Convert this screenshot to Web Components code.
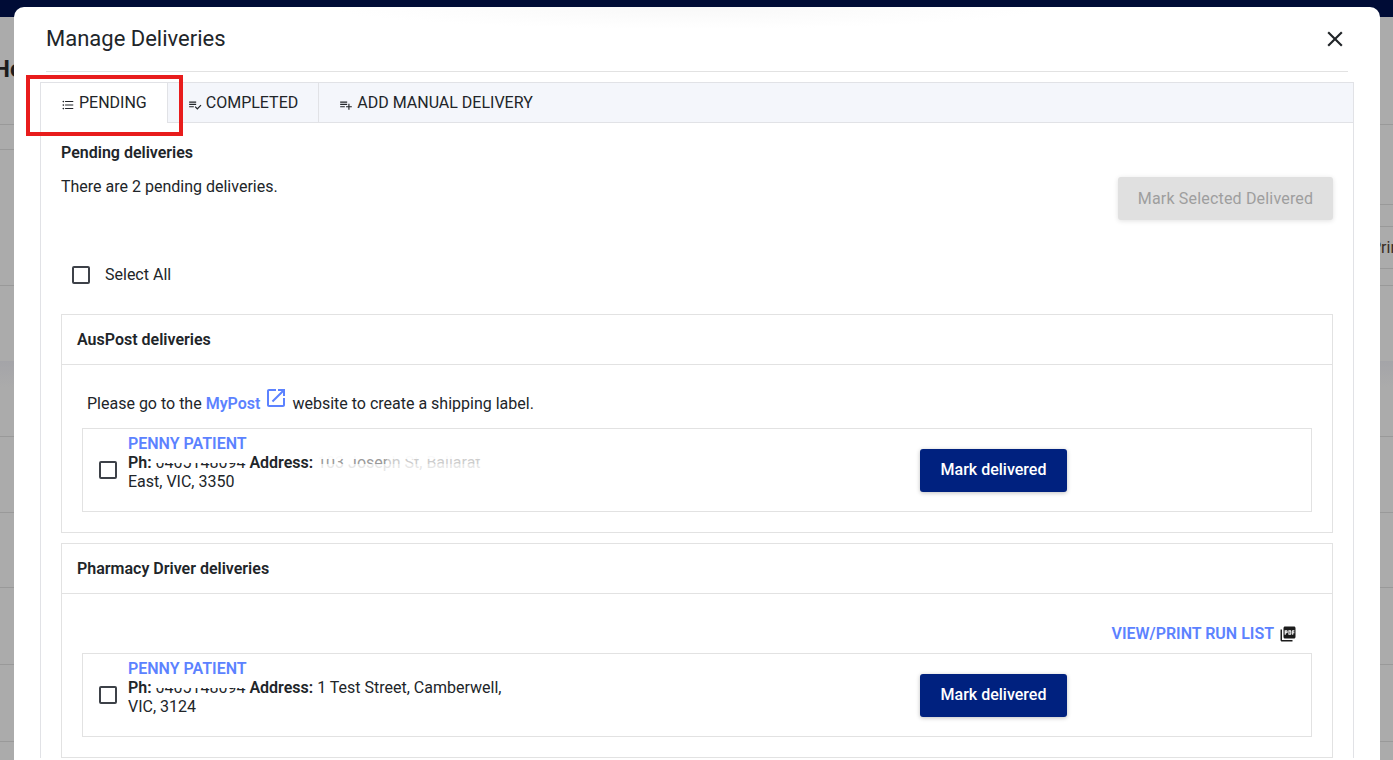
<!doctype html>
<html lang="en">
<head>
<meta charset="utf-8">
<title>Manage Deliveries</title>
<style>
  html, body { margin: 0; height: 100%; overflow: hidden; }
  body { font: 16px/19px Roboto, "Liberation Sans", sans-serif; color: #212529; }
</style>
</head>
<body>

<template id="pageBackdropTemplate">
  <style>
    :host { display: block; position: relative; height: 760px; overflow: hidden; background: #ababab; }
    .nav { height: 17px; background: #000c36; }
    .title { height: 108px; border-bottom: 1px solid #999; display: flex; align-items: center; box-sizing: border-box; overflow: hidden; }
    .title span { margin-left: -7px; margin-top: -2px; font-size: 24px; font-weight: 700; color: #1d1d1d; }
    .columns { display: flex; justify-content: space-between; height: 161px; border-bottom: 1px solid #999; box-sizing: border-box; }
    .col-left div { width: 14px; height: 24px; border-bottom: 1px solid #999; }
    .col-right { width: 22px; display: flex; flex-direction: column; }
    .col-right div { border-bottom: 1px solid #999; box-sizing: border-box; flex: none; }
    .print { display: flex; align-items: center; white-space: nowrap; color: #3a2c22; }
    .row { height: 75px; border-bottom: 1px solid #999; }
    .row.shade { background: linear-gradient(#a4a4a8, #ababab 26px); height: 75px; }
    .row.tall { height: 76px; }
    .row.plain { border-bottom: 0; }
    ::slotted(delivery-modal) { position: absolute; left: 14px; top: 7px; }
  </style>
  <div class="nav"></div>
  <div class="title"><span>Home</span></div>
  <div class="columns">
    <div class="col-left"><div></div></div>
    <div class="col-right">
      <div style="height:80px"></div>
      <div style="height:22px"></div>
      <div class="print" style="height:42px">Print</div>
      <div style="height:17px;border-bottom:0"></div>
    </div>
  </div>
  <div class="row plain"></div>
  <div class="row shade"></div>
  <div class="row"></div>
  <div class="row" style="height:74px"></div>
  <div class="row tall"></div>
  <div class="row tall"></div>
  <div class="row plain"></div>
  <slot></slot>
</template>

<template id="deliveryModalTemplate">
  <style>
    :host { display: block; position: relative; width: 1366px; height: 800px; box-sizing: border-box; padding: 0 26px; border-radius: 10px;
      background: radial-gradient(ellipse 360px 22px at 676px 0, #f8f8f8, #fff) no-repeat #fff; color: #212529; }
    header { display: flex; align-items: center; justify-content: space-between; height: 65px; box-sizing: border-box; margin: 0 6px; border-bottom: 1px solid #e2e2e2; }
    h1 { margin: 0; font-size: 22px; line-height: 26px; font-weight: 400; }
    button { display: flex; margin: 0; padding: 0; border: 0; background: none; color: #212529; }
    main { margin-top: 10px; }
    .callout { position: absolute; left: 12px; top: 68px; width: 157px; height: 61px; box-sizing: border-box; border: 4px solid #e81c1c; pointer-events: none; }
  </style>
  <header>
    <h1><slot name="title"></slot></h1>
    <button aria-label="Close"><app-icon name="close" size="26"></app-icon></button>
  </header>
  <main><slot></slot></main>
  <div class="callout"></div>
</template>

<template id="tabBarTemplate">
  <style>
    :host { display: flex; height: 41px; box-sizing: border-box; background: #f4f6fb; border: 1px solid #e1e2e6; }
  </style>
  <slot></slot>
</template>

<template id="tabItemTemplate">
  <style>
    :host { display: flex; align-items: center; gap: 4px; height: 39px; padding: 0 20px 1px; box-sizing: border-box; border-right: 1px solid #e1e2e6; color: #212529; text-transform: uppercase; white-space: nowrap; }
    :host([active]) { background: #fff; height: 40px; padding-bottom: 2px; }
    :host([plain]) { border-right: 0; }
    app-icon { margin-top: 5px; }
  </style>
  <app-icon size="14"></app-icon>
  <slot></slot>
</template>

<template id="tabPanelTemplate">
  <style>
    :host { display: block; padding: 20px 20px 0; border-left: 1px solid #e1e2e6; border-right: 1px solid #e1e2e6; }
    h2 { margin: 0; font-size: 16px; line-height: 19px; font-weight: 600; }
    .summary { display: flex; justify-content: space-between; margin-top: 15px; }
    .mark-all { width: 215px; height: 43px; padding: 0; border: 0; border-radius: 3px; background: #e0e0e0; color: #9e9e9e; font: inherit; letter-spacing: .18px; box-shadow: 0 1px 5px rgba(0,0,0,.12); }
    .select-all { display: flex; align-items: center; gap: 15px; height: 18px; margin: 46px 0 30px 11px; }
    .select-all span { margin-bottom: 2px; }
    .cards { display: flex; flex-direction: column; gap: 10px; }
  </style>
  <h2><slot name="heading"></slot></h2>
  <div class="summary">
    <span><slot name="summary"></slot></span>
    <button class="mark-all" disabled>Mark Selected Delivered</button>
  </div>
  <div class="select-all"><check-box></check-box><span>Select All</span></div>
  <div class="cards"><slot></slot></div>
</template>

<template id="deliveryCardTemplate">
  <style>
    :host { display: block; border: 1px solid #e2e2e2; }
    h3 { display: flex; align-items: center; height: 49px; margin: 0; padding: 0 15px; border-bottom: 1px solid #e2e2e2; font-size: 16px; line-height: 19px; font-weight: 600; }
    .body { padding: 0 20px 20px; }
  </style>
  <h3><slot name="heading"></slot></h3>
  <div class="body"><slot></slot></div>
</template>

<template id="mypostNoteTemplate">
  <style>
    :host { display: flex; align-items: center; gap: 4px; height: 19px; padding: 29px 0 15px 5px; white-space: nowrap; }
    b { color: #5c82ff; font-weight: 600; }
    app-icon { margin-bottom: 12px; color: #5c82ff; }
  </style>
  <span>Please go to the <b>MyPost</b></span>
  <app-icon name="open" size="24"></app-icon>
  <span>website to create a shipping label.</span>
</template>

<template id="runListLinkTemplate">
  <style>
    :host { display: flex; justify-content: flex-end; align-items: center; gap: 5px; height: 19px; padding: 30px 15px 10px 0; color: #5c82ff; font-weight: 600; }
    app-icon { color: #1c1c1c; }
  </style>
  <span>VIEW/PRINT RUN LIST</span>
  <app-icon name="pdf" size="18"></app-icon>
</template>

<template id="deliveryRowTemplate">
  <style>
    :host { display: flex; align-items: center; height: 84px; box-sizing: border-box; padding-left: 16px; border: 1px solid #e2e2e2; }
    .info { flex: 0 0 380px; align-self: flex-start; margin-left: 11px; padding-top: 5px; }
    .name { color: #5c82ff; font-weight: 600; text-transform: uppercase; }
    b { font-weight: 600; }
    button { width: 147px; height: 43px; margin-left: 412px; padding: 0 0 2px; border: 0; border-radius: 3px; background: #00217f; color: #fff; font: 500 16px/19px Roboto, "Liberation Sans", sans-serif; box-shadow: 0 1px 4px rgba(0,0,0,.25); }
  </style>
  <check-box></check-box>
  <div class="info">
    <div class="name"><slot name="name"></slot></div>
    <div><b>Ph:</b> <slot name="phone"></slot> <b>Address:</b> <slot name="address"></slot></div>
  </div>
  <button>Mark delivered</button>
</template>

<template id="redactedTextTemplate">
  <style>
    :host { display: inline-block; position: relative; line-height: 19px; vertical-align: top; }
    .wipe { position: absolute; left: -2px; right: -2px; top: 0; height: 10px; background: #fff; }
    .wipe.low { top: 15px; height: 1px; background: rgba(255,255,255,.5); }
    .mid { display: none; }
    :host([kind="address"]) { color: #9a9a9a; }
    :host([kind="address"]) .wipe { height: 6px; background: rgba(255,255,255,.95); }
    :host([kind="address"]) .wipe.low { top: 11px; height: 8px; background: rgba(255,255,255,.75); }
    :host([kind="address"]) .mid { display: block; position: absolute; left: 70px; right: -2px; top: 6px; height: 5px; background: rgba(255,255,255,.5); }
  </style>
  <slot></slot>
  <div class="wipe"></div>
  <div class="wipe low"></div>
  <div class="mid"></div>
</template>

<template id="checkBoxTemplate">
  <style>
    :host { display: block; flex: none; width: 18px; height: 18px; box-sizing: border-box; border: 2px solid #3d4148; border-radius: 2px; background: #fff; }
  </style>
</template>

<script>
  (function deliveries(customElements, document) {
    'use strict';

    const ICONS = {
      list: 'M4 10.5c-.83 0-1.5.67-1.5 1.5s.67 1.5 1.5 1.5 1.5-.67 1.5-1.5-.67-1.5-1.5-1.5zm0-6c-.83 0-1.5.67-1.5 1.5S3.17 7.5 4 7.5 5.5 6.83 5.5 6 4.83 4.5 4 4.5zm0 12c-.83 0-1.5.68-1.5 1.5s.68 1.5 1.5 1.5 1.5-.68 1.5-1.5-.67-1.5-1.5-1.5zM7 19h14v-2H7v2zm0-6h14v-2H7v2zm0-8v2h14V5H7z',
      check: 'M14 10H2v2h12v-2zm0-4H2v2h12V6zM2 16h8v-2H2v2zm19.5-4.5L23 13l-6.99 7-4.51-4.5L13 14l3.01 3 5.49-5.5z',
      add: 'M14 10H2v2h12v-2zm0-4H2v2h12V6zm4 8v-4h-2v4h-4v2h4v4h2v-4h4v-2h-4zM2 16h8v-2H2v2z',
      close: 'M19 6.41L17.59 5 12 10.59 6.41 5 5 6.41 10.59 12 5 17.59 6.41 19 12 13.41 17.59 19 19 17.59 13.41 12z',
      open: 'M19 19H5V5h7V3H5c-1.11 0-2 .9-2 2v14c0 1.1.89 2 2 2h14c1.1 0 2-.9 2-2v-7h-2v7zM14 3v2h3.59l-9.83 9.83 1.41 1.41L19 6.41V10h2V3h-7z',
      pdf: 'M20 2H8c-1.1 0-2 .9-2 2v12c0 1.1.9 2 2 2h12c1.1 0 2-.9 2-2V4c0-1.1-.9-2-2-2zm-8.5 7.5c0 .83-.67 1.5-1.5 1.5H9v2H7.5V7H10c.83 0 1.5.67 1.5 1.5v1zm5 2c0 .83-.67 1.5-1.5 1.5h-2.5V7H15c.83 0 1.5.67 1.5 1.5v3zm4-3H19v1h1.5V11H19v2h-1.5V7h3v1.5zM9 9.5h1v-1H9v1zM4 6H2v14c0 1.1.9 2 2 2h14v-2H4V6zm10 5.5h1v-3h-1v3z'
    };

    // every plain element is just a template stamped into an open shadow root
    function stamped(templateId) {
      return class extends HTMLElement {
        constructor() {
          super();
          const shadowRoot = this.attachShadow({mode: 'open'});
          const templ = document.getElementById(templateId);
          shadowRoot.appendChild(document.importNode(templ.content, true));
        }
      };
    }

    class AppIcon extends HTMLElement {
      static get observedAttributes() {
        return ['name', 'size'];
      }

      constructor() {
        super();
        this.attachShadow({mode: 'open'});
      }

      connectedCallback() {
        this._render();
      }

      attributeChangedCallback() {
        this._render();
      }

      _render() {
        const size = this.getAttribute('size') || 24;
        const d = ICONS[this.getAttribute('name')] || '';
        this.shadowRoot.innerHTML = `
          <style>:host { display: block; flex: none; line-height: 0; } svg { display: block; fill: currentColor; }</style>
          <svg width="${size}" height="${size}" viewBox="0 0 24 24"><path d="${d}"></path></svg>`;
      }
    }

    class TabItem extends stamped('tabItemTemplate') {
      connectedCallback() {
        this.shadowRoot.querySelector('app-icon').setAttribute('name', this.getAttribute('icon'));
      }
    }

    customElements.define('app-icon', AppIcon);
    customElements.define('tab-item', TabItem);
    customElements.define('page-backdrop', stamped('pageBackdropTemplate'));
    customElements.define('delivery-modal', stamped('deliveryModalTemplate'));
    customElements.define('tab-bar', stamped('tabBarTemplate'));
    customElements.define('tab-panel', stamped('tabPanelTemplate'));
    customElements.define('delivery-card', stamped('deliveryCardTemplate'));
    customElements.define('mypost-note', stamped('mypostNoteTemplate'));
    customElements.define('run-list-link', stamped('runListLinkTemplate'));
    customElements.define('delivery-row', stamped('deliveryRowTemplate'));
    customElements.define('redacted-text', stamped('redactedTextTemplate'));
    customElements.define('check-box', stamped('checkBoxTemplate'));
  })(window.customElements, document);
</script>

<page-backdrop>
  <delivery-modal>
    <span slot="title">Manage Deliveries</span>
    <tab-bar>
      <tab-item icon="list" active>Pending</tab-item>
      <tab-item icon="check">Completed</tab-item>
      <tab-item icon="add" plain>Add Manual Delivery</tab-item>
    </tab-bar>
    <tab-panel>
      <span slot="heading">Pending deliveries</span>
      <span slot="summary">There are 2 pending deliveries.</span>

      <delivery-card>
        <span slot="heading">AusPost deliveries</span>
        <mypost-note></mypost-note>
        <delivery-row>
          <span slot="name">Penny Patient</span>
          <redacted-text slot="phone">0405148094</redacted-text>
          <span slot="address"><redacted-text kind="address">103 Joseph St, Ballarat</redacted-text> East, VIC, 3350</span>
        </delivery-row>
      </delivery-card>

      <delivery-card>
        <span slot="heading">Pharmacy Driver deliveries</span>
        <run-list-link></run-list-link>
        <delivery-row>
          <span slot="name">Penny Patient</span>
          <redacted-text slot="phone">0405148094</redacted-text>
          <span slot="address">1 Test Street, Camberwell, VIC, 3124</span>
        </delivery-row>
      </delivery-card>
    </tab-panel>
  </delivery-modal>
</page-backdrop>

</body>
</html>
